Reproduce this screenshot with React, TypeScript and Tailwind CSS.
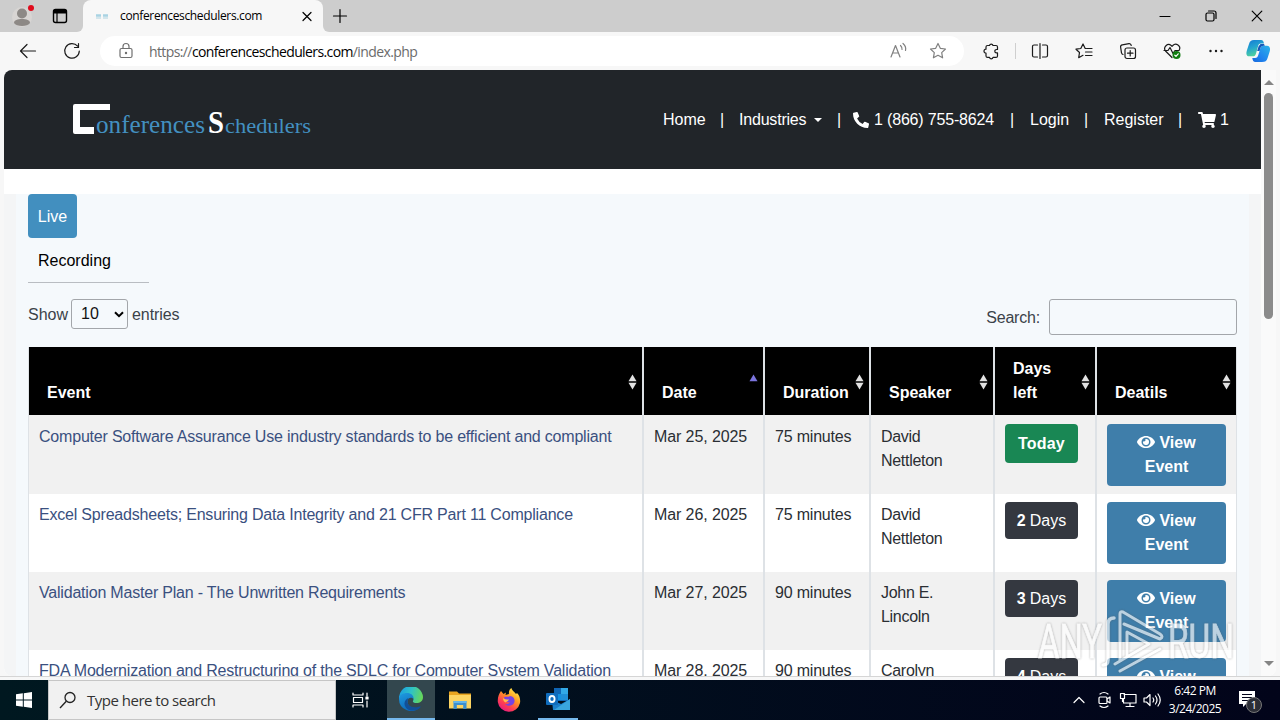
import { ReactNode } from "react";
import clsx from "clsx";
import { FaEye, FaPhoneAlt, FaShoppingCart } from "react-icons/fa";

interface EventType {
  title: string;
  date: string;
  duration: string;
  speaker: string;
  daysLeft: number;
}

const events: EventType[] = [
  {
    title: "Computer Software Assurance Use industry standards to be efficient and compliant",
    date: "Mar 25, 2025",
    duration: "75 minutes",
    speaker: "David Nettleton",
    daysLeft: 0,
  },
  {
    title: "Excel Spreadsheets; Ensuring Data Integrity and 21 CFR Part 11 Compliance",
    date: "Mar 26, 2025",
    duration: "75 minutes",
    speaker: "David Nettleton",
    daysLeft: 2,
  },
  {
    title: "Validation Master Plan - The Unwritten Requirements",
    date: "Mar 27, 2025",
    duration: "90 minutes",
    speaker: "John E. Lincoln",
    daysLeft: 3,
  },
  {
    title: "FDA Modernization and Restructuring of the SDLC for Computer System Validation",
    date: "Mar 28, 2025",
    duration: "90 minutes",
    speaker: "Carolyn Troiano",
    daysLeft: 4,
  },
];

const columns = ["Event", "Date", "Duration", "Speaker", "Days left", "Deatils"];

const GRID = "grid grid-cols-[615px_121px_106px_124px_102px_141px]";

interface IconProps {
  children: ReactNode;
  className?: string;
}

// 20x20 line icon used all over the browser chrome
const Icon = ({ children, className }: IconProps) => (
  <svg
    viewBox="0 0 20 20"
    fill="none"
    stroke="currentColor"
    strokeWidth="1.2"
    strokeLinecap="round"
    strokeLinejoin="round"
    className={clsx("h-5 w-5 shrink-0", className)}
  >
    {children}
  </svg>
);

const TitleBar = () => (
  <div className="flex h-8 shrink-0 bg-[#f7f7f7]">
    <div className="flex w-[83px] items-center rounded-br-md bg-[#cdcdcd] pl-3">
      <svg viewBox="0 0 24 24" className="h-6 w-6">
        <circle cx="10" cy="13" r="10" fill="#d8d5d3" />
        <circle cx="10" cy="9.5" r="5" fill="#8d8986" />
        <path d="M2 19c0-3 3.500-4 8-4s8 1 8 4c-2 4-14 4-16 0z" fill="#8d8986" />
        <circle cx="19" cy="4" r="3" fill="#e00b1c" />
      </svg>
      <Icon className="ml-[14px]">
        <rect x="3.500" y="3.500" width="13" height="13" rx="2" strokeWidth="1.400" />
        <path d="M4 4.500h12v2.500H4z" fill="currentColor" />
        <path d="M7 7v9" />
      </Icon>
    </div>
    <div className="w-[240px] bg-[#cdcdcd]">
      <div className="flex h-8 items-center rounded-t-lg bg-[#f7f7f7] pl-3">
        <svg viewBox="0 0 14 8" className="h-2 w-[14px]">
          <path d="M1 3.500h5M8 3.500h5" stroke="#a9d3e3" strokeWidth="2.500" />
          <path d="M1 6h5M8 6h5" stroke="#c7dfe8" strokeWidth="1.500" />
        </svg>
        <span className="ml-[11px] w-[177px] text-[12px] tracking-[-0.35px] whitespace-nowrap text-black">
          conferenceschedulers.com
        </span>
        <Icon>
          <path d="M6 6.500l8 8M14 6.500l-8 8" />
        </Icon>
      </div>
    </div>
    <div className="flex flex-1 items-center rounded-bl-md bg-[#cdcdcd] pl-[7px]">
      <Icon>
        <path d="M10 3.500v13M3.500 10h13" />
      </Icon>
    </div>
    <div className="flex items-center gap-[26px] bg-[#cdcdcd] pr-[13px]">
      <Icon>
        <path d="M5 10.500h10" />
      </Icon>
      <Icon>
        <rect x="5" y="7" width="8" height="8" rx="1.500" />
        <path d="M7.500 5h5.500a2 2 0 0 1 2 2v5.500" />
      </Icon>
      <Icon>
        <path d="M5.200 5.200l9.600 9.600M14.800 5.200l-9.600 9.600" />
      </Icon>
    </div>
  </div>
);

const CopilotIcon = () => (
  <svg viewBox="0 0 24 24" className="h-6 w-6 shrink-0">
    <defs>
      <linearGradient id="copA" x1="0" y1="0" x2="0.400" y2="1">
        <stop offset="0" stopColor="#1478d4" />
        <stop offset="0.500" stopColor="#23a3d0" />
        <stop offset="1" stopColor="#52d49a" />
      </linearGradient>
      <linearGradient id="copB" x1="1" y1="0" x2="0" y2="1">
        <stop offset="0" stopColor="#2bb4e8" />
        <stop offset="0.600" stopColor="#1f83ee" />
        <stop offset="1" stopColor="#1769dc" />
      </linearGradient>
    </defs>
    <path d="M8 1h7c2 0 2.500 1.500 3 3.500h-3c-2 0-2.500 1-3 3l-2 7c-.6 2-1.300 2.800-3.500 2.800H3C0 17.300 0 14 1 11l2-6c1-3 2-4 5-4z" fill="url(#copA)" />
    <path d="M16 23H9.500c-2.200 0-2.700-1.500-3.200-4H9c2 0 2.700-1 3.300-3l2-6.500c.6-2 1.300-2.800 3.300-2.800H21c3 0 3.600 3 2.600 6l-2 6.300c-1 3-2.300 4-5.600 4z" fill="url(#copB)" />
    <path d="M14.500 5H18l.8 1.700h-1.200c-2 0-2.700.8-3.300 2.800l-.8 2.500h-2.300l1.300-4.500z" fill="#1557b8" />
  </svg>
);

const Toolbar = () => (
  <div className="flex h-[38px] shrink-0 items-center bg-[#f7f7f7] pl-[18px] text-[#1b1b1b]">
    <Icon>
      <path d="M17.500 10h-15M9 3.500L2.500 10 9 16.500" />
    </Icon>
    <Icon className="ml-6">
      <path d="M15.600 5.200A7.300 7.300 0 1 0 17.300 10M16.500 2.500v4h-4" />
    </Icon>
    <div className="ml-[18px] flex h-[30px] w-[864px] items-center rounded-full bg-white pl-4">
      <Icon className="text-[#707070]">
        <rect x="4" y="7.500" width="12" height="9" rx="1.500" />
        <path d="M7 7.500V5.500a3 3 0 0 1 6 0v2" />
        <circle cx="10" cy="12" r="0.600" fill="currentColor" />
      </Icon>
      <span className="ml-[13px] w-[739px] text-[14px] tracking-[-0.61px] whitespace-nowrap text-[#6b6b6b]">
        https://<span className="text-black">conferenceschedulers.com</span>/index.php
      </span>
      <Icon className="text-[#808080]">
        <path d="M3 16L7.500 4.500 12 16M4.500 12h6M12.500 4.500q2 2 1.500 4M15 2.500q3.500 3 2.500 7" />
      </Icon>
      <Icon className="ml-5 text-[#808080]">
        <path d="M10 2.500l2.300 4.800 5.200.7-3.800 3.600.9 5.200-4.600-2.500-4.600 2.500.9-5.200L2.500 8l5.200-.7z" />
      </Icon>
    </div>
    <Icon className="ml-[17px]">
      <path d="M6.500 4.500h2a1.800 1.800 0 0 1 3.500 0h3a1.500 1.500 0 0 1 1.500 1.500v2.500h-1a1.700 1.700 0 0 0 0 3.400h1v3a1.500 1.500 0 0 1-1.500 1.500h-3a1.800 1.800 0 0 1-3.500 0h-2A1.500 1.500 0 0 1 5 15v-2.800a2 2 0 0 1 0-4V6a1.500 1.500 0 0 1 1.500-1.500z" />
    </Icon>
    <span className="ml-[14px] h-4 w-px bg-[#cfcfcf]" />
    <Icon className="ml-[14px]">
      <path d="M7.500 4H4a1.500 1.500 0 0 0-1.500 1.500v9A1.500 1.500 0 0 0 4 16h3.500M12.500 4H16a1.500 1.500 0 0 1 1.500 1.500v9A1.500 1.500 0 0 1 16 16h-3.500M10 2.500v15" />
    </Icon>
    <Icon className="ml-6">
      <path d="M11.800 7.500h-.6L9 3 6.800 7.500 2 8.200l3.500 3.300-.8 5.200L9 14.300M12.500 7.500H18M11.500 11H18M11.500 14.500H18" />
    </Icon>
    <Icon className="ml-6">
      <rect x="7" y="7" width="10.500" height="10.500" rx="2" />
      <path d="M12.200 9.500v5.500M9.500 12.200h5.500M5 13.500a2 2 0 0 1-1.500-1.700L2.600 6a2 2 0 0 1 1.700-2.200L11 2.700A2 2 0 0 1 13.200 4.500" />
    </Icon>
    <Icon className="ml-6">
      <path d="M10 16.500L3.500 10A4 4 0 0 1 9.200 4.500l.8.800.8-.8A4 4 0 0 1 17.300 9M2 9.500h4l2-3 3 6 2-3h4" />
      <circle cx="14.500" cy="14" r="4" fill="#107c10" stroke="none" />
      <path d="M12.800 14.200l1.200 1.100 2.200-2.500" stroke="#fff" />
    </Icon>
    <Icon className="ml-6">
      <path d="M4.500 10h.01M10 10h.01M15.500 10h.01" strokeWidth="2.400" />
    </Icon>
    <span className="ml-5">
      <CopilotIcon />
    </span>
  </div>
);

const Logo = () => (
  <svg viewBox="0 0 242 36" className="h-9 w-[242px]">
    <path d="M3 2H38V8H8V25H22V32H3a2 2 0 0 1-2-2V4a2 2 0 0 1 2-2z" fill="#fff" />
    <g fontFamily="'Liberation Serif', serif" fill="#4390c0">
      <text x="24" y="31" fontSize="25" textLength="109" lengthAdjust="spacingAndGlyphs">onferences</text>
      <text x="136" y="31" fontSize="31" fontWeight="700" fill="#fff" textLength="16" lengthAdjust="spacingAndGlyphs">S</text>
      <text x="153" y="31" fontSize="22" textLength="86" lengthAdjust="spacingAndGlyphs">chedulers</text>
    </g>
  </svg>
);

const SiteHeader = () => (
  <header className="flex h-[99px] shrink-0 bg-[#212529] pl-[68px] text-white">
    <div className="w-[591px] pt-8">
      <Logo />
    </div>
    <nav className="flex h-[99px] items-center whitespace-nowrap">
      <a className="w-[57px]">Home</a>
      <span className="w-[19px]">|</span>
      <a className="flex w-[98px] items-center tracking-[-0.2px]">
        Industries
        <span className="ml-2 border-x-4 border-t-4 border-x-transparent border-t-white" />
      </a>
      <span className="w-[16px]">|</span>
      <a className="flex w-[157px] items-center gap-[5px] tracking-[-0.17px]">
        <FaPhoneAlt className="h-4 w-4" />1 (866) 755-8624
      </a>
      <span className="w-[20px]">|</span>
      <a className="w-[54px]">Login</a>
      <span className="w-[20px]">|</span>
      <a className="w-[74px]">Register</a>
      <span className="w-[20px]">|</span>
      <a className="flex items-center gap-[4px]">
        <FaShoppingCart className="h-4 w-[18px]" />1
      </a>
    </nav>
  </header>
);

const SortArrows = ({ active }: { active: boolean }) => (
  <svg viewBox="0 0 9 16" className="h-4 w-[9px]">
    <path d="M.5 7.300L4.500.5l4 6.800z" fill={active ? "#7b74dd" : "#e2e2e2"} />
    {!active && <path d="M.5 8.700h8l-4 6.800z" fill="#e2e2e2" />}
  </svg>
);

const EventsTable = () => (
  <div className="mt-3">
    <div className={GRID}>
      {columns.map((col) => (
        <div
          key={col}
          className="flex h-[68px] items-end justify-between border-x border-[#dee2e6] bg-black pr-[5px] pb-[10px] pl-[18px] font-bold text-white"
        >
          <span className={clsx(col === "Days left" && "w-12")}>{col}</span>
          <span className="mb-[15px]">
            <SortArrows active={col === "Date"} />
          </span>
        </div>
      ))}
    </div>
    {events.map((event, i) => (
      <div
        key={event.title}
        className={clsx(
          GRID,
          i === 0 ? "h-[79px] pt-[9px]" : "h-[78px] pt-2",
          i % 2 === 0 ? "bg-[#f1f1f1]" : "bg-white",
          "text-[#2a2e33] [&>div]:border-x [&>div]:border-[#dee2e6] [&>div]:px-[10px]",
          // column borders run through the row's top padding
          i === 0 ? "[&>div]:-mt-[9px] [&>div]:pt-[9px]" : "[&>div]:-mt-2 [&>div]:pt-2"
        )}
      >
        <div className="tracking-[-0.2px] whitespace-nowrap text-[#3a5080]">
          <p className="pt-px">{event.title}</p>
        </div>
        <div className="tracking-[-0.1px] whitespace-nowrap">
          <p className="pt-px">{event.date}</p>
        </div>
        <div className="tracking-[-0.2px] whitespace-nowrap">
          <p className="pt-px">{event.duration}</p>
        </div>
        <div className="tracking-[-0.3px]">
          <p className="pt-px">{event.speaker}</p>
        </div>
        <div>
          {event.daysLeft === 0 ? (
            <div className="flex h-[39px] w-[73px] items-center justify-center rounded bg-[#198754] font-bold tracking-[0.2px] text-white">
              Today
            </div>
          ) : (
            <div className="flex h-[37px] w-[73px] items-center justify-center gap-1 rounded bg-[#343840] text-white">
              <b>{event.daysLeft}</b> Days
            </div>
          )}
        </div>
        <div>
          <div className="flex h-[62px] w-[119px] flex-col items-center rounded bg-[#3f7eaa] pt-[7px] font-bold text-white">
            <span className="flex items-center gap-1">
              <FaEye className="mb-0.5 h-[18px] w-[18px]" /> View
            </span>
            <span>Event</span>
          </div>
        </div>
      </div>
    ))}
  </div>
);

const Watermark = () => (
  <svg
    viewBox="0 0 200 66"
    className="absolute right-[40px] bottom-0 h-[66px] w-[200px] opacity-65 drop-shadow-[0_0_1px_rgba(90,90,90,0.7)]"
  >
    <g fontFamily="Roboto, sans-serif" fontSize="48" fill="#fff" stroke="#fff" strokeWidth="0.8">
      <text x="2" y="48" textLength="64" lengthAdjust="spacingAndGlyphs">ANY</text>
      <text x="132" y="48" textLength="66" lengthAdjust="spacingAndGlyphs">RUN</text>
    </g>
    <g fill="none" stroke="#fff" strokeWidth="3.5" strokeLinecap="round" strokeLinejoin="round">
      <path d="M78 8q-6 0-6 6v36q0 5-5 5" />
      <path d="M84 50V4q0-3 3-2l37 22q4 3 0 5L88 14M91 46V22l22 12-34 20M84 61l40-22" strokeWidth="3" />
    </g>
  </svg>
);

const Page = () => (
  <div className="flex h-[606px] shrink-0 bg-[#f7f7f7] px-1 font-['Liberation_Sans',Arial,sans-serif] text-base leading-6">
    <div className="relative flex w-[1272px] overflow-hidden rounded-lg rounded-tr-none bg-white">
      <div className="flex w-[1257px] flex-col overflow-hidden">
        <SiteHeader />
        <div className="mt-[25px] flex-1 bg-[#f4f5f6] px-3">
          <div className="h-full bg-[#f5f9fc] px-3 text-[#212529]">
            <div className="flex h-11 w-[49px] items-center justify-center rounded bg-[#428fbf] pt-px text-white">Live</div>
            <div className="flex h-[45px] w-[121px] items-center border-b border-[#b9bdc2] pt-px pl-[10px] text-black">
              Recording
            </div>
            <div className="flex justify-between pt-4 text-[#3b4249]">
              <div className="flex h-[30px] items-center">
                <span className="pt-px">Show</span>
                <span className="mr-1 ml-[3px] flex h-[30px] w-[57px] items-center justify-between rounded-[3px] border border-[#a3a6aa] pr-[3px] pl-[9px] text-[#111]">
                  10
                  <svg viewBox="0 0 10 7" className="h-[7px] w-[10px]">
                    <path d="M1 1.200l4 4 4-4" fill="none" stroke="#000" strokeWidth="2" />
                  </svg>
                </span>
                <span className="pt-px tracking-[-0.1px]">entries</span>
              </div>
              <div className="flex h-9 items-center">
                <span className="pt-px tracking-[-0.2px]">Search:</span>
                <span className="ml-[9px] h-9 w-[188px] rounded-[3px] border border-[#a3a6aa]" />
              </div>
            </div>
            <EventsTable />
          </div>
        </div>
      </div>
      <div className="flex w-[15px] flex-col items-center justify-between bg-[#fafafa] pt-[10px] pb-[10px]">
        <div className="flex flex-col items-center gap-2">
          <span className="border-x-[5px] border-b-[5px] border-x-transparent border-b-[#858585]" />
          <span className="h-[226px] w-[9px] rounded-full bg-[#8b8b8b]" />
        </div>
        <span className="border-x-[5px] border-t-[5px] border-x-transparent border-t-[#858585]" />
      </div>
      <Watermark />
    </div>
  </div>
);

const WindowsLogo = () => (
  <svg viewBox="0 0 16 16" className="h-4 w-4">
    <path d="M0 2.300l6.800-1v6.200H0zM7.800 1.200L16 0v7.500H7.800zM0 8.500h6.800v6.200l-6.800-1zM7.800 8.500H16V16l-8.200-1.200z" fill="#fff" />
  </svg>
);

const EdgeIcon = () => (
  <svg viewBox="0 0 24 24" className="h-6 w-6">
    <defs>
      <linearGradient id="edgeTop" x1="0" y1="0.300" x2="1" y2="0.500">
        <stop offset="0" stopColor="#1b9de2" />
        <stop offset="0.500" stopColor="#2fc3c5" />
        <stop offset="1" stopColor="#67d759" />
      </linearGradient>
      <linearGradient id="edgeLeft" x1="0" y1="0" x2="0.500" y2="1">
        <stop offset="0" stopColor="#1f9be0" />
        <stop offset="1" stopColor="#0c67b8" />
      </linearGradient>
    </defs>
    <path d="M0 12a12 12 0 0 1 24-2c0 4-3 6-6.500 6-3 0-4-1-3.500-2 1.500-2.500-.5-5-4-5C5 9 1 11 0 12z" fill="url(#edgeTop)" />
    <path d="M0 12c0-4 4-6 8-6 4.500 0 7 3 6.500 6-2-2.500-6-1.500-6 2.500 0 5 5 8 12 6A12 12 0 0 1 0 12z" fill="url(#edgeLeft)" />
    <path d="M8.500 14c-.5 4.500 4.500 8 12 5.500.8-.3 1.500 0 1 .8C17 26 6 24 5.500 17c-.2-3 2-5.500 4-6-.6.800-.9 2-1 3z" fill="#124f97" />
  </svg>
);

const FolderIcon = () => (
  <svg viewBox="0 0 22 20" className="h-5 w-[22px]">
    <path d="M0 1.500h8l2 2h12V18H0z" fill="#e9a520" />
    <path d="M0 5h22v13.500H0z" fill="#fcd462" />
    <path d="M4.500 11h13v8h-3.300v-4H7.800v4H4.500z" fill="#3c8fcf" />
    <path d="M4.500 11h13v2h-13z" fill="#64b5e9" />
  </svg>
);

const FirefoxIcon = () => (
  <svg viewBox="0 0 24 24" className="h-6 w-6">
    <defs>
      <linearGradient id="fox" x1="0.850" y1="0" x2="0.200" y2="1">
        <stop offset="0" stopColor="#fff44f" />
        <stop offset="0.400" stopColor="#ff9a22" />
        <stop offset="0.700" stopColor="#ff4050" />
        <stop offset="1" stopColor="#e31587" />
      </linearGradient>
    </defs>
    <path d="M4 3l2.500 3L9 4.500 8.500 7 12 6c-.5-3 .8-5 2.500-6 .5 3 3 3.500 4.500 6l1-1c3 3 3.500 7 3 10A11.300 11.300 0 0 1 .8 14C.5 9 2 6 4 3z" fill="url(#fox)" />
    <path d="M7 9.500c2-1.500 5 0 6-1.500 4 .5 5.500 4 4 7s-6.500 4-9 1c3 .5 4-.5 5-1.500-3 0-5-2-6-5z" fill="#7542e5" />
    <path d="M6 10c1 1.500 3.500 1.500 6 1.500-1 2-3 2-3.500 3C7 13.500 6 12 6 10z" fill="#ffbd4f" />
  </svg>
);

const OutlookIcon = () => (
  <svg viewBox="0 0 24 22" className="h-[22px] w-6">
    <path d="M8 0h14v13H8z" fill="#1066b5" />
    <path d="M15 0h7v6h-7z" fill="#32a9e7" />
    <path d="M8 6h7v6H8z" fill="#1490df" />
    <path d="M15 6h7v6h-7z" fill="#1f8fd8" />
    <path d="M6 12l9 4 9-5v11H7z" fill="#1b7fcb" />
    <path d="M24 11v11H8z" fill="#3aa5de" />
    <rect y="5" width="12" height="12" rx="1" fill="#0f6cbd" />
    <ellipse cx="6" cy="11" rx="2.600" ry="3" fill="none" stroke="#fff" strokeWidth="1.800" />
  </svg>
);

const Taskbar = () => (
  <div className="flex h-10 shrink-0 bg-gradient-to-r from-[#001820] to-[#02041a] text-white">
    <div className="flex w-12 items-center justify-center">
      <WindowsLogo />
    </div>
    <div className="flex w-[288px] items-center border border-[#c6c6c6] bg-[#f1f1f1] pl-[10px] text-[#333]">
      <svg viewBox="0 0 18 18" className="h-[18px] w-[18px]" fill="none" stroke="#222" strokeWidth="1.300">
        <circle cx="11" cy="6.500" r="5" />
        <path d="M7.300 10.200L1 17" />
      </svg>
      <span className="ml-[10px] text-[15px] tracking-[-0.5px]">Type here to search</span>
    </div>
    <div className="flex w-[47px] items-center justify-center">
      <Icon>
        <path d="M3 3v2h10V3M3 17v-2h10v2M3.500 7.500h9v5h-9zM17 3v3M17 11v6" />
        <path d="M16 7h2v2h-2z" fill="currentColor" />
      </Icon>
    </div>
    <div className="ml-1 flex w-12 items-center justify-center border-b-2 border-[#76b9ed] bg-[#33474e]">
      <EdgeIcon />
    </div>
    <div className="flex w-[49px] items-center justify-center">
      <FolderIcon />
    </div>
    <div className="flex w-[49px] items-center justify-center">
      <FirefoxIcon />
    </div>
    <div className="ml-[5px] flex w-10 items-center justify-center border-b-2 border-[#76b9ed]">
      <OutlookIcon />
    </div>
    <div className="flex flex-1 items-center justify-end pr-[16px]">
      <Icon>
        <path d="M5 12.500l5-5 5 5" />
      </Icon>
      <Icon className="ml-[5px]">
        <path d="M6 4q4-3 8 0M6 16q4 3 8 0M13 9l3-2v6l-3-2" />
        <rect x="5" y="7" width="8" height="6.500" rx="1" />
      </Icon>
      <Icon className="ml-1">
        <path d="M6 4.500h12v8.500H5.500V9M12 13v3.500M8 16.500h8M2.500 3.500h4v5h-4zM4.500 8.500v3" />
      </Icon>
      <Icon className="ml-1">
        <path d="M2 8v4h2.500L8 15.500v-11L4.500 8zM11 8q1.500 2 0 4M13.500 6q3 4 0 8M16 4q4.500 6 0 12" />
      </Icon>
      <div className="flex w-[66px] flex-col items-center text-[12px] leading-[18px] tracking-[-0.5px] whitespace-nowrap">
        <span>6:42 PM</span>
        <span>3/24/2025</span>
      </div>
      <svg viewBox="0 0 26 26" className="ml-[10px] h-[26px] w-[26px]">
        <path d="M1 4h16v13h-9l-3 3v-3H1z" fill="#fff" />
        <path d="M4 7.500h10M4 10.500h10M4 13.500h7" stroke="#02041a" />
        <circle cx="16" cy="18" r="7.500" fill="#2b2d36" stroke="#777" />
        <text x="16" y="22" textAnchor="middle" fontSize="11" fill="#fff">1</text>
      </svg>
    </div>
  </div>
);

export default function App() {
  return (
    <div className="flex h-[720px] w-[1280px] flex-col overflow-hidden bg-[#f7f7f7] font-['Open_Sans','Noto_Sans',sans-serif]">
      <TitleBar />
      <Toolbar />
      <Page />
      <div className="h-1 shrink-0 border-t border-[#d5d5d5] bg-[#f7f7f7]" />
      <Taskbar />
    </div>
  );
}
